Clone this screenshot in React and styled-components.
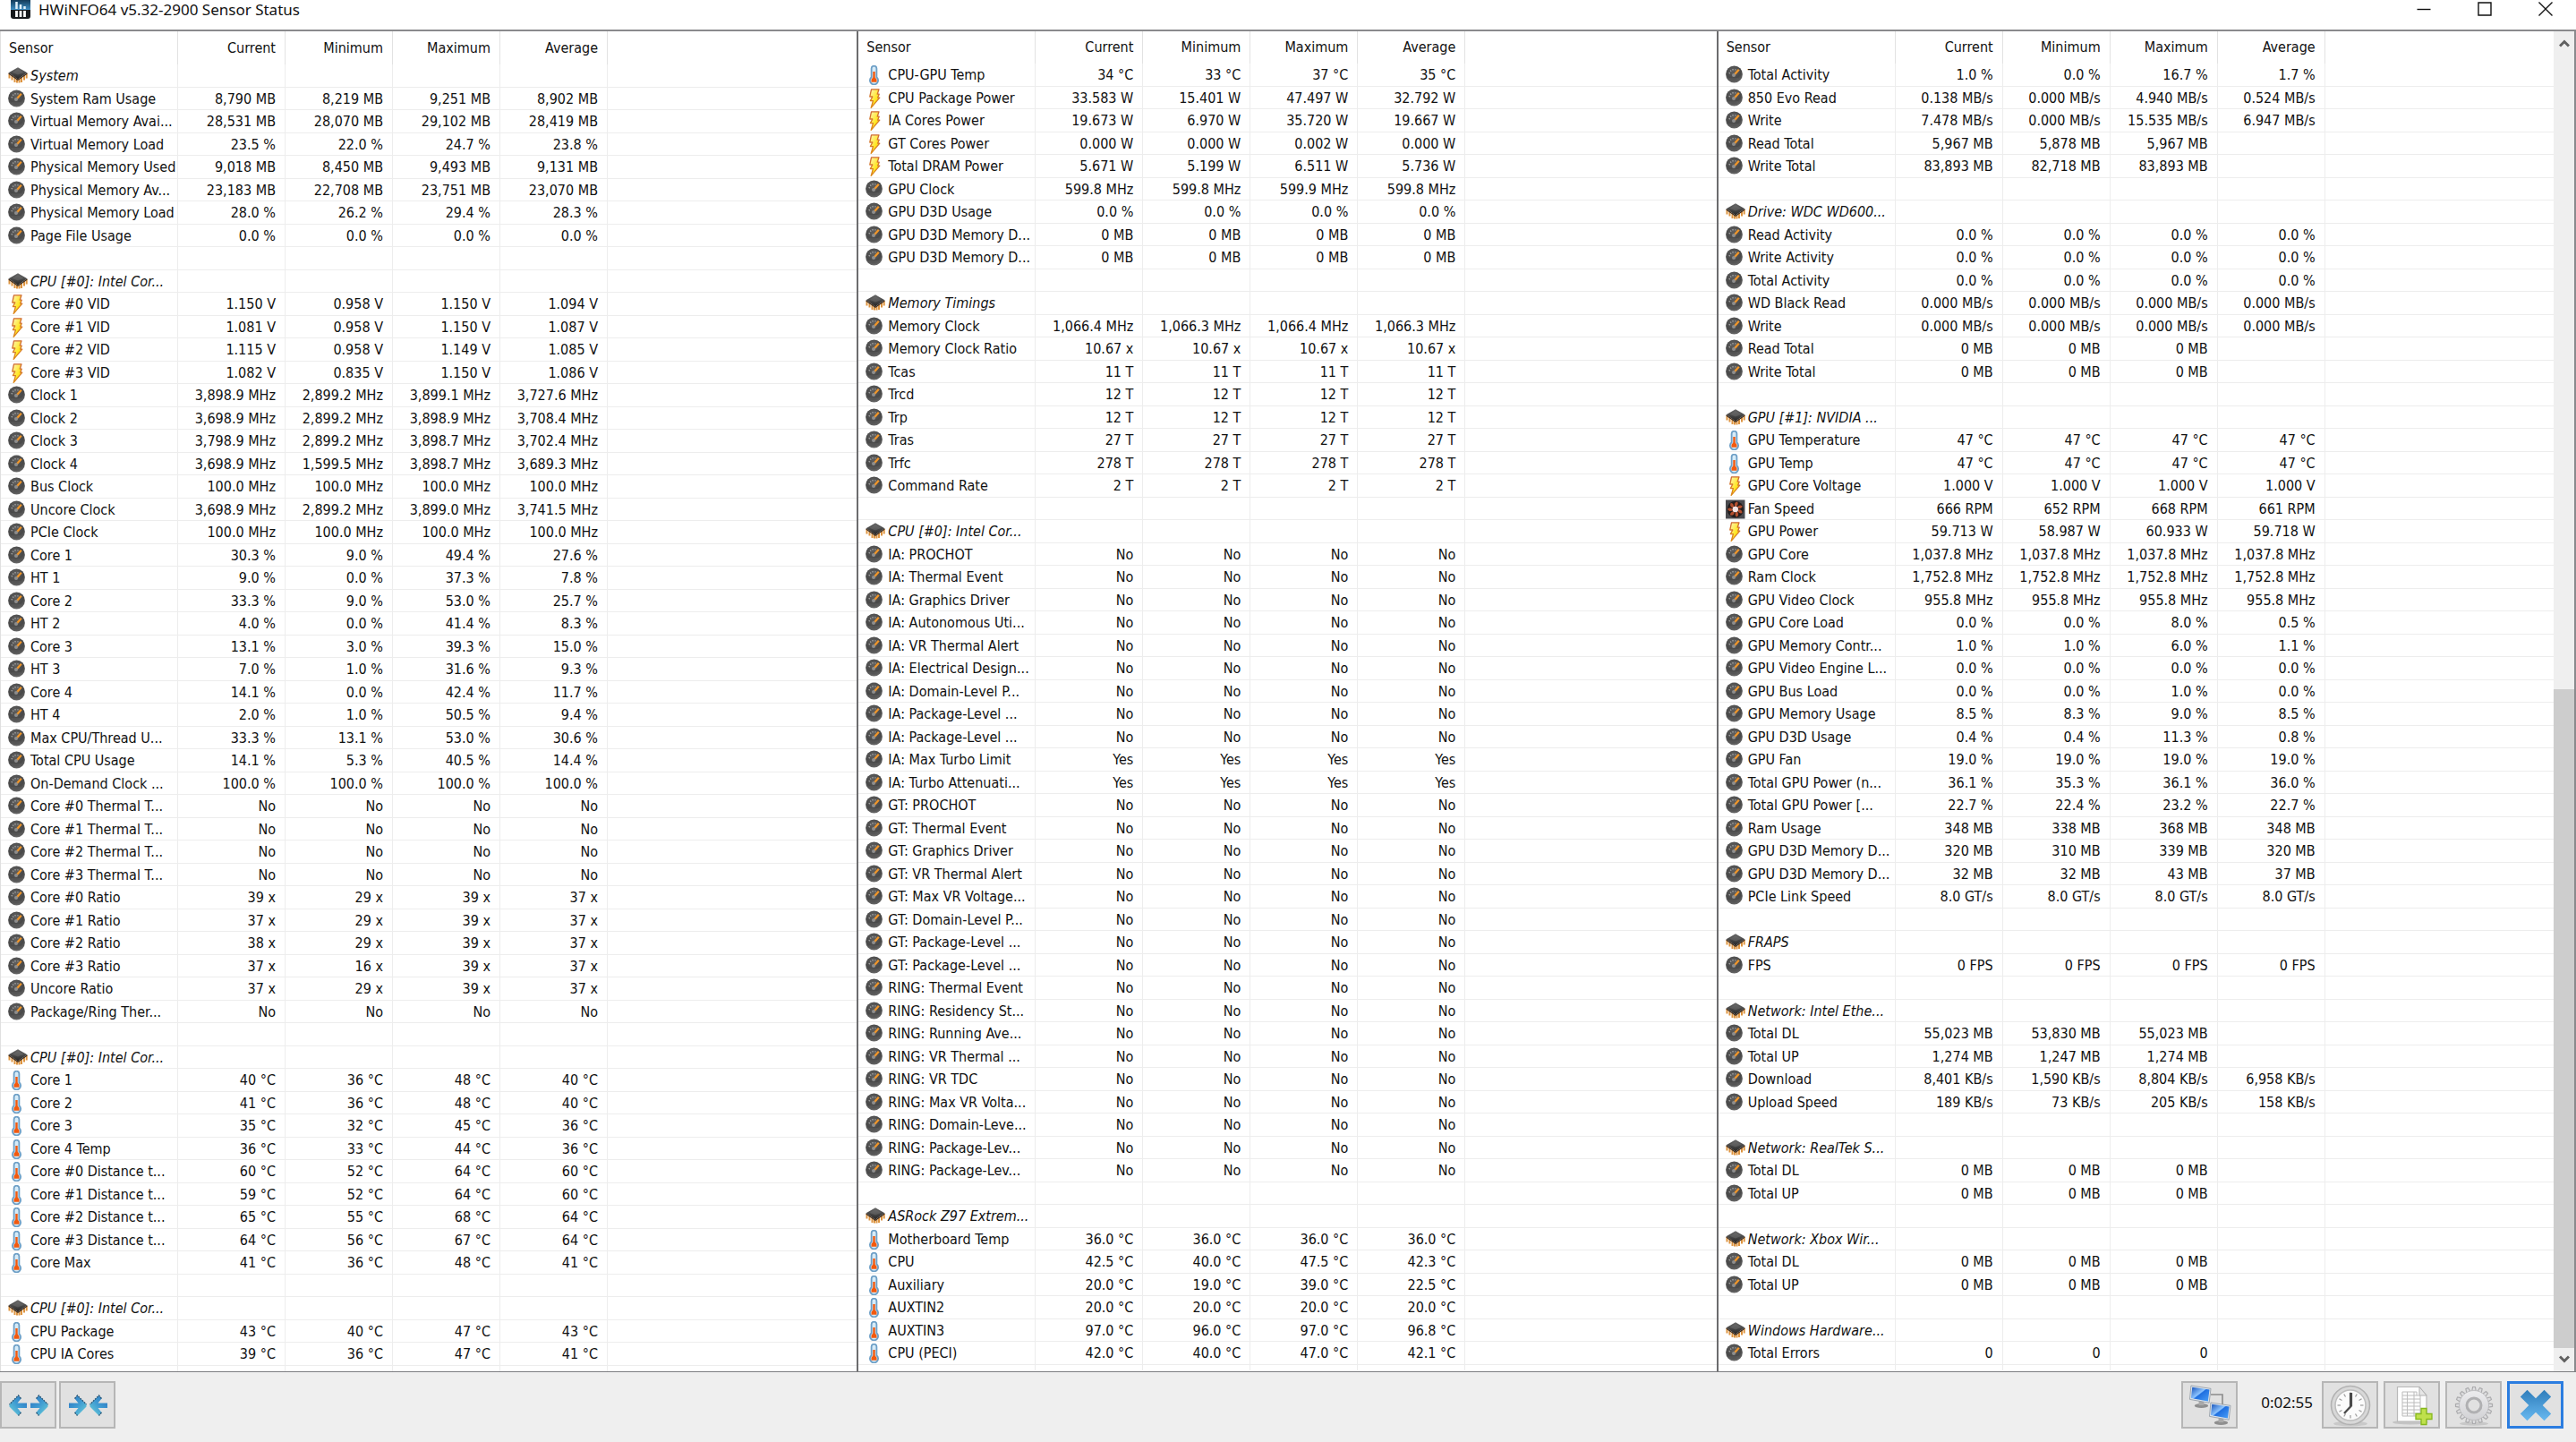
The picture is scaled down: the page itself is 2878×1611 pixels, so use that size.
import React from "react";
import styled, { createGlobalStyle } from "styled-components";

const Global = createGlobalStyle`
  * { box-sizing: border-box; }
  body {
    margin: 0;
    background: #fff;
    color: #111;
    font: 16px/22px "DejaVu Sans Condensed", "DejaVu Sans", sans-serif;
    font-stretch: condensed;
  }
`;

const Page = styled.div`
  min-height: 100vh;
  display: flex;
  flex-direction: column;
`;

const TitleBar = styled.header`
  display: flex;
  align-items: flex-start;
  justify-content: space-between;
  height: 33px;
`;

const Title = styled.h1`
  display: flex;
  align-items: center;
  gap: 9px;
  margin: 0;
  padding-left: 12px;
  font: 400 17px/22px "Noto Sans", "Open Sans", sans-serif;
`;

const WindowButtons = styled.div`
  display: flex;
`;

const WindowButton = styled.button`
  width: 68px;
  height: 20px;
  padding: 0;
  border: 0;
  background: none;
  display: flex;
  align-items: center;
  justify-content: center;
`;

const Panels = styled.main`
  flex: 1;
  display: grid;
  grid-template-columns: 319fr 320fr 320fr;
  border-top: 2px solid #8a8a8d;
  border-bottom: 1px solid #7c7d80;
`;

const Panel = styled.section`
  display: flex;
  align-items: stretch;
  min-width: 0;
  border-left: ${(p) => (p.$first ? "1px solid #e0e0e0" : "2px solid #6c6c6e")};
`;

const Table = styled.table`
  flex: 1;
  min-width: 0;
  align-self: flex-start;
  table-layout: fixed;
  border-collapse: separate;
  border-spacing: 0;
`;

const Col = styled.col`
  width: ${(p) => (p.$name ? "198px" : p.$rest ? "auto" : "120px")};
`;

const Head = styled.th`
  height: ${(p) => (p.$tall ? "37px" : "36px")};
  padding: 0 10px 0 9px;
  border-right: ${(p) => (p.$rest ? "0" : "1px solid #e2e2e2")};
  font-weight: 400;
  text-align: ${(p) => (p.$name ? "left" : "right")};
`;

const Row = styled.tr`
  height: 25px;
  &:nth-child(odd) {
    height: 26px;
  }
`;

const Tail = styled.tr`
  height: 6px;
`;

const Cell = styled.td`
  padding: ${(p) => (p.$bare ? "0" : "2px 10px 0 0")};
  border-right: 1px solid #ededed;
  border-bottom: ${(p) => (p.$bare ? "0" : "1px solid #ededed")};
  text-align: right;
  vertical-align: top;
  white-space: nowrap;
  &:last-child {
    border-right: 0;
  }
`;

const NameCell = styled(Cell)`
  padding: 2px 0 0 8px;
`;

const Name = styled.div`
  display: flex;
  align-items: center;
  gap: 3px;
  height: 22px;
  overflow: hidden;
  font-style: ${(p) => (p.$group ? "italic" : "normal")};
`;

const Glyph = styled.svg`
  display: block;
  flex: none;
  width: ${(p) => p.$w || 22}px;
  height: ${(p) => p.$h || 22}px;
`;

const Defs = styled.svg`
  display: block;
  width: 0;
  height: 0;
`;

const ScrollBar = styled.div`
  flex: none;
  width: 25px;
  display: flex;
  flex-direction: column;
  background: #efefef;
  border-right: 2px solid #8a8a8d;
`;

const ScrollArrow = styled.button`
  height: 26px;
  padding: 0;
  border: 0;
  background: none;
  display: flex;
  align-items: center;
  justify-content: center;
`;

const ScrollSpace = styled.div`
  flex: 709 0 0;
`;

const ScrollThumb = styled.div`
  flex: 737 0 0;
  background: #cdcdcd;
`;

const ToolBar = styled.footer`
  display: flex;
  justify-content: space-between;
  height: 78px;
  padding: 10px 14px 0 0;
  background: #efefef;
`;

const ToolGroup = styled.div`
  display: flex;
  gap: ${(p) => p.$gap}px;
`;

const ToolButton = styled.button`
  width: 63px;
  height: 53px;
  padding: 0;
  border: ${(p) => (p.$active ? "3px solid #2b7de0" : "2px solid #b6b6b6")};
  background: #e1e1e1;
  display: flex;
  align-items: center;
  justify-content: center;
`;

const Timer = styled.time`
  padding: 0 4px 0 20px;
  font: 17px/48px "Noto Sans", "Open Sans", sans-serif;
`;

/* One line per row: icon | name | current | minimum | maximum | average.
   A single value stands for all four columns; an empty line is a spacer. */
const LEFT = `
h|System
g|System Ram Usage|8,790 MB|8,219 MB|9,251 MB|8,902 MB
g|Virtual Memory Avai...|28,531 MB|28,070 MB|29,102 MB|28,419 MB
g|Virtual Memory Load|23.5 %|22.0 %|24.7 %|23.8 %
g|Physical Memory Used|9,018 MB|8,450 MB|9,493 MB|9,131 MB
g|Physical Memory Av...|23,183 MB|22,708 MB|23,751 MB|23,070 MB
g|Physical Memory Load|28.0 %|26.2 %|29.4 %|28.3 %
g|Page File Usage|0.0 %

h|CPU [#0]: Intel Cor...
v|Core #0 VID|1.150 V|0.958 V|1.150 V|1.094 V
v|Core #1 VID|1.081 V|0.958 V|1.150 V|1.087 V
v|Core #2 VID|1.115 V|0.958 V|1.149 V|1.085 V
v|Core #3 VID|1.082 V|0.835 V|1.150 V|1.086 V
g|Clock 1|3,898.9 MHz|2,899.2 MHz|3,899.1 MHz|3,727.6 MHz
g|Clock 2|3,698.9 MHz|2,899.2 MHz|3,898.9 MHz|3,708.4 MHz
g|Clock 3|3,798.9 MHz|2,899.2 MHz|3,898.7 MHz|3,702.4 MHz
g|Clock 4|3,698.9 MHz|1,599.5 MHz|3,898.7 MHz|3,689.3 MHz
g|Bus Clock|100.0 MHz
g|Uncore Clock|3,698.9 MHz|2,899.2 MHz|3,899.0 MHz|3,741.5 MHz
g|PCIe Clock|100.0 MHz
g|Core 1|30.3 %|9.0 %|49.4 %|27.6 %
g|HT 1|9.0 %|0.0 %|37.3 %|7.8 %
g|Core 2|33.3 %|9.0 %|53.0 %|25.7 %
g|HT 2|4.0 %|0.0 %|41.4 %|8.3 %
g|Core 3|13.1 %|3.0 %|39.3 %|15.0 %
g|HT 3|7.0 %|1.0 %|31.6 %|9.3 %
g|Core 4|14.1 %|0.0 %|42.4 %|11.7 %
g|HT 4|2.0 %|1.0 %|50.5 %|9.4 %
g|Max CPU/Thread U...|33.3 %|13.1 %|53.0 %|30.6 %
g|Total CPU Usage|14.1 %|5.3 %|40.5 %|14.4 %
g|On-Demand Clock ...|100.0 %
g|Core #0 Thermal T...|No
g|Core #1 Thermal T...|No
g|Core #2 Thermal T...|No
g|Core #3 Thermal T...|No
g|Core #0 Ratio|39 x|29 x|39 x|37 x
g|Core #1 Ratio|37 x|29 x|39 x|37 x
g|Core #2 Ratio|38 x|29 x|39 x|37 x
g|Core #3 Ratio|37 x|16 x|39 x|37 x
g|Uncore Ratio|37 x|29 x|39 x|37 x
g|Package/Ring Ther...|No

h|CPU [#0]: Intel Cor...
t|Core 1|40 °C|36 °C|48 °C|40 °C
t|Core 2|41 °C|36 °C|48 °C|40 °C
t|Core 3|35 °C|32 °C|45 °C|36 °C
t|Core 4 Temp|36 °C|33 °C|44 °C|36 °C
t|Core #0 Distance t...|60 °C|52 °C|64 °C|60 °C
t|Core #1 Distance t...|59 °C|52 °C|64 °C|60 °C
t|Core #2 Distance t...|65 °C|55 °C|68 °C|64 °C
t|Core #3 Distance t...|64 °C|56 °C|67 °C|64 °C
t|Core Max|41 °C|36 °C|48 °C|41 °C

h|CPU [#0]: Intel Cor...
t|CPU Package|43 °C|40 °C|47 °C|43 °C
t|CPU IA Cores|39 °C|36 °C|47 °C|41 °C`;

const MIDDLE = `
t|CPU-GPU Temp|34 °C|33 °C|37 °C|35 °C
v|CPU Package Power|33.583 W|15.401 W|47.497 W|32.792 W
v|IA Cores Power|19.673 W|6.970 W|35.720 W|19.667 W
v|GT Cores Power|0.000 W|0.000 W|0.002 W|0.000 W
v|Total DRAM Power|5.671 W|5.199 W|6.511 W|5.736 W
g|GPU Clock|599.8 MHz|599.8 MHz|599.9 MHz|599.8 MHz
g|GPU D3D Usage|0.0 %
g|GPU D3D Memory D...|0 MB
g|GPU D3D Memory D...|0 MB

h|Memory Timings
g|Memory Clock|1,066.4 MHz|1,066.3 MHz|1,066.4 MHz|1,066.3 MHz
g|Memory Clock Ratio|10.67 x
g|Tcas|11 T
g|Trcd|12 T
g|Trp|12 T
g|Tras|27 T
g|Trfc|278 T
g|Command Rate|2 T

h|CPU [#0]: Intel Cor...
g|IA: PROCHOT|No
g|IA: Thermal Event|No
g|IA: Graphics Driver|No
g|IA: Autonomous Uti...|No
g|IA: VR Thermal Alert|No
g|IA: Electrical Design...|No
g|IA: Domain-Level P...|No
g|IA: Package-Level ...|No
g|IA: Package-Level ...|No
g|IA: Max Turbo Limit|Yes
g|IA: Turbo Attenuati...|Yes
g|GT: PROCHOT|No
g|GT: Thermal Event|No
g|GT: Graphics Driver|No
g|GT: VR Thermal Alert|No
g|GT: Max VR Voltage...|No
g|GT: Domain-Level P...|No
g|GT: Package-Level ...|No
g|GT: Package-Level ...|No
g|RING: Thermal Event|No
g|RING: Residency St...|No
g|RING: Running Ave...|No
g|RING: VR Thermal ...|No
g|RING: VR TDC|No
g|RING: Max VR Volta...|No
g|RING: Domain-Leve...|No
g|RING: Package-Lev...|No
g|RING: Package-Lev...|No

h|ASRock Z97 Extrem...
t|Motherboard Temp|36.0 °C
t|CPU|42.5 °C|40.0 °C|47.5 °C|42.3 °C
t|Auxiliary|20.0 °C|19.0 °C|39.0 °C|22.5 °C
t|AUXTIN2|20.0 °C
t|AUXTIN3|97.0 °C|96.0 °C|97.0 °C|96.8 °C
t|CPU (PECI)|42.0 °C|40.0 °C|47.0 °C|42.1 °C`;

const RIGHT = `
g|Total Activity|1.0 %|0.0 %|16.7 %|1.7 %
g|850 Evo Read|0.138 MB/s|0.000 MB/s|4.940 MB/s|0.524 MB/s
g|Write|7.478 MB/s|0.000 MB/s|15.535 MB/s|6.947 MB/s
g|Read Total|5,967 MB|5,878 MB|5,967 MB|
g|Write Total|83,893 MB|82,718 MB|83,893 MB|

h|Drive: WDC WD600...
g|Read Activity|0.0 %
g|Write Activity|0.0 %
g|Total Activity|0.0 %
g|WD Black Read|0.000 MB/s
g|Write|0.000 MB/s
g|Read Total|0 MB|0 MB|0 MB|
g|Write Total|0 MB|0 MB|0 MB|

h|GPU [#1]: NVIDIA ...
t|GPU Temperature|47 °C
t|GPU Temp|47 °C
v|GPU Core Voltage|1.000 V
f|Fan Speed|666 RPM|652 RPM|668 RPM|661 RPM
v|GPU Power|59.713 W|58.987 W|60.933 W|59.718 W
g|GPU Core|1,037.8 MHz
g|Ram Clock|1,752.8 MHz
g|GPU Video Clock|955.8 MHz
g|GPU Core Load|0.0 %|0.0 %|8.0 %|0.5 %
g|GPU Memory Contr...|1.0 %|1.0 %|6.0 %|1.1 %
g|GPU Video Engine L...|0.0 %
g|GPU Bus Load|0.0 %|0.0 %|1.0 %|0.0 %
g|GPU Memory Usage|8.5 %|8.3 %|9.0 %|8.5 %
g|GPU D3D Usage|0.4 %|0.4 %|11.3 %|0.8 %
g|GPU Fan|19.0 %
g|Total GPU Power (n...|36.1 %|35.3 %|36.1 %|36.0 %
g|Total GPU Power [...|22.7 %|22.4 %|23.2 %|22.7 %
g|Ram Usage|348 MB|338 MB|368 MB|348 MB
g|GPU D3D Memory D...|320 MB|310 MB|339 MB|320 MB
g|GPU D3D Memory D...|32 MB|32 MB|43 MB|37 MB
g|PCIe Link Speed|8.0 GT/s

h|FRAPS
g|FPS|0 FPS

h|Network: Intel Ethe...
g|Total DL|55,023 MB|53,830 MB|55,023 MB|
g|Total UP|1,274 MB|1,247 MB|1,274 MB|
g|Download|8,401 KB/s|1,590 KB/s|8,804 KB/s|6,958 KB/s
g|Upload Speed|189 KB/s|73 KB/s|205 KB/s|158 KB/s

h|Network: RealTek S...
g|Total DL|0 MB|0 MB|0 MB|
g|Total UP|0 MB|0 MB|0 MB|

h|Network: Xbox Wir...
g|Total DL|0 MB|0 MB|0 MB|
g|Total UP|0 MB|0 MB|0 MB|

h|Windows Hardware...
g|Total Errors|0|0|0|`;

const parse = (source) =>
  source
    .slice(1)
    .split("\n")
    .map((line) => {
      const [kind = "", name = "", ...values] = line.split("|");
      if (values.length === 1) return { kind, name, values: Array(4).fill(values[0]) };
      return { kind, name, values: [0, 1, 2, 3].map((i) => values[i] || "") };
    });

const SYMBOLS = { h: "chip", g: "gauge", v: "bolt", t: "thermo", f: "fan" };

const SharedArt = () => (
  <Defs aria-hidden="true">
    <defs>
      <radialGradient id="dial" cx="45%" cy="30%" r="75%">
        <stop offset="0" stopColor="#606060" />
        <stop offset="0.6" stopColor="#484848" />
        <stop offset="1" stopColor="#6e6e6e" />
      </radialGradient>
      <linearGradient id="chipTop" x1="0" y1="0" x2="0" y2="1">
        <stop offset="0" stopColor="#6a6a6a" />
        <stop offset="1" stopColor="#262626" />
      </linearGradient>
      <linearGradient id="boltFill" x1="0" y1="0" x2="1" y2="1">
        <stop offset="0" stopColor="#fff6b8" />
        <stop offset="0.6" stopColor="#ffe51c" />
        <stop offset="1" stopColor="#f6c400" />
      </linearGradient>
      <linearGradient id="boltEdge" x1="0" y1="0" x2="0" y2="1">
        <stop offset="0" stopColor="#cf6a35" />
        <stop offset="1" stopColor="#dd8a1c" />
      </linearGradient>
      <linearGradient id="screen" x1="0" y1="0" x2="1" y2="1">
        <stop offset="0" stopColor="#1450b8" />
        <stop offset="0.45" stopColor="#8cc4ff" />
        <stop offset="0.5" stopColor="#1f6fe0" />
        <stop offset="1" stopColor="#4aa0f8" />
      </linearGradient>
      <linearGradient id="cross" x1="0" y1="0" x2="0" y2="1">
        <stop offset="0" stopColor="#2f7dbb" />
        <stop offset="1" stopColor="#68b9f0" />
      </linearGradient>
      <linearGradient id="gearFill" x1="0" y1="0" x2="0" y2="1">
        <stop offset="0" stopColor="#ececee" />
        <stop offset="1" stopColor="#d2d2d5" />
      </linearGradient>
      <linearGradient id="appTop" x1="0" y1="0" x2="0" y2="1">
        <stop offset="0" stopColor="#123a58" />
        <stop offset="1" stopColor="#3f8fc4" />
      </linearGradient>
      <linearGradient id="arrowFill" x1="0" y1="0" x2="1" y2="1">
        <stop offset="0" stopColor="#2a74c0" />
        <stop offset="0.5" stopColor="#3f9bd2" />
        <stop offset="1" stopColor="#6ed2d8" />
      </linearGradient>
      <symbol id="gauge" viewBox="0 0 22 22">
        <circle cx="9.5" cy="10" r="9.4" fill="url(#dial)" />
        <path d="M3.6 8.6l1.4.5M5.2 5.6l1 1M8 4v1.4M11 4.2v1.2" stroke="#b4b4b4" strokeWidth="1.1" />
        <path d="M9.2 11l5.6-6.2" stroke="#f0962a" strokeWidth="2.4" />
        <circle cx="9" cy="11" r="2" fill="#8d8d8d" />
        <path d="M4 15h10" stroke="#5c5c5c" strokeWidth="1" />
      </symbol>
      <symbol id="chip" viewBox="0 0 22 22">
        <path d="M1.5 8v5.500M4.500 10v5.500M7.500 12v6M10 14v4.500M12.500 14v4.500M15 12v6M18 10v5.500M20.700 8v5.500" stroke="#dd9440" strokeWidth="2" />
        <path d="M11 1.200L21.400 7.200 11 14.400 0.600 7.200z" fill="url(#chipTop)" />
        <path d="M0.600 7.200L11 14.400 21.400 7.200v1.600L11 16 0.600 8.800z" fill="#3c2e24" />
        <path d="M11 3.200L17.500 6.800 11 9.600 4.500 6.800z" fill="#777" opacity="0.4" />
      </symbol>
      <symbol id="bolt" viewBox="0 0 22 22">
        <path d="M6.500 0.800H15L13.200 6.200H15.200L13.600 10.200H15.800L6.200 21.400 8.400 13.600H5.400L7.800 9H4.800z" fill="url(#boltFill)" stroke="url(#boltEdge)" strokeWidth="1.300" strokeLinejoin="round" />
      </symbol>
      <symbol id="thermo" viewBox="0 0 22 22">
        <path d="M6.600 3.600a2.900 2.900 0 0 1 5.800 0V13.200a4.600 4.600 0 1 1-5.800 0z" fill="#d6ebf8" stroke="#6d9fc6" strokeWidth="1.800" />
        <path d="M8.300 7h2.400v6.500l1.800 2.200v3.100H6.500v-3.100l1.800-2.200z" fill="#f2590e" />
      </symbol>
      <symbol id="fan" viewBox="0 0 22 22">
        <rect x="0" y="0.500" width="21.500" height="21" fill="#4a4a4e" />
        <circle cx="10.800" cy="11" r="9.200" fill="#231d1d" />
        {[0, 51, 103, 154, 206, 257, 309].map((a) => (
          <path key={a} d="M10.800 8.500C9 6 10 3.200 13 2.600 14.500 4.500 13.500 6.500 11.800 8z" fill="#b5502f" transform={`rotate(${a} 10.800 11)`} />
        ))}
        <circle cx="10.800" cy="11" r="3.200" fill="#f3e4e4" />
      </symbol>
      <symbol id="arrowRight" viewBox="0 0 22 24">
        <path d="M1 9.500H11.500L7.500 4.500 10.500 1 20.500 11V13.500L10.500 23.500 7.500 20 11.500 15H1z" fill="url(#arrowFill)" />
        <path d="M7.500 4.500L10.500 1 20.500 11M7.500 20L10.500 23.500" fill="none" stroke="#24506f" strokeWidth="1.200" strokeDasharray="2 1" />
      </symbol>
      <symbol id="monitor" viewBox="0 0 26 28">
        <ellipse cx="14" cy="24.500" rx="8" ry="2.600" fill="#8f8f8f" />
        <path d="M11 18h6v6h-6z" fill="#a9a9a9" />
        <path d="M2 1L25 4.500 23 21 0.500 17z" fill="#dce4ec" stroke="#8a949e" strokeWidth="0.800" />
        <path d="M3.400 2.800L23.400 5.800 21.700 19.200 2 15.600z" fill="url(#screen)" />
      </symbol>
    </defs>
  </Defs>
);

const AppLogo = () => (
  <Glyph viewBox="0 0 22 22" aria-hidden="true">
    <rect width="22" height="21" rx="3" fill="#16191c" />
    <path d="M0 0H22V11H0z" fill="url(#appTop)" />
    <path d="M6.500 2v8M11 5v5M15.500 7v3" stroke="#dff0fa" strokeWidth="2.500" />
    <path d="M6.500 12v7M11 12v7M15.500 12v7" stroke="#fff" strokeWidth="2.800" />
  </Glyph>
);

const TwoArrows = ({ inward }) => (
  <Glyph viewBox="0 0 46 24" $w={46} $h={24} aria-hidden="true">
    <g transform={inward ? "translate(46 0) scale(-1 1)" : "translate(22 0) scale(-1 1)"}>
      <use href="#arrowRight" width="22" height="24" />
    </g>
    <g transform={inward ? "translate(1 0)" : "translate(24 0)"}>
      <use href="#arrowRight" width="22" height="24" />
    </g>
  </Glyph>
);

const Computers = () => (
  <Glyph viewBox="0 0 48 48" $w={48} $h={48} aria-hidden="true">
    <path d="M25 12h13v12" fill="none" stroke="#8b8b8b" strokeWidth="1.600" />
    <use href="#monitor" x="1" y="1" width="25" height="27" />
    <use href="#monitor" x="23" y="20" width="25" height="27" />
  </Glyph>
);

const Clock = () => (
  <Glyph viewBox="0 0 48 48" $w={48} $h={48} aria-hidden="true">
    <ellipse cx="24" cy="44.500" rx="19" ry="3" fill="#c9c9c9" />
    <circle cx="24" cy="24" r="21.500" fill="#d8d8d8" stroke="#b2b2b2" strokeWidth="1.600" />
    <circle cx="24" cy="24" r="17" fill="#fbfbfb" stroke="#bdbdbd" strokeWidth="1.500" />
    {Array.from({ length: 12 }, (_, i) => (
      <path key={i} d="M24 9.500v3.500" stroke="#9a9a9a" strokeWidth="1.200" transform={`rotate(${i * 30} 24 24)`} />
    ))}
    <path d="M24.500 10v15" stroke="#4a4a4a" strokeWidth="3.200" />
    <path d="M25 24.500L17 33" stroke="#4a4a4a" strokeWidth="2.400" />
  </Glyph>
);

const SheetPlus = () => (
  <Glyph viewBox="0 0 48 48" $w={48} $h={48} aria-hidden="true">
    <ellipse cx="22" cy="43" rx="20" ry="2.500" fill="#c4c4c4" />
    <path d="M7.500 3.500H32L40 13V42H7.500z" fill="#fdfdfd" stroke="#b8b8b8" strokeWidth="1.200" />
    <path d="M32 3.500V13h8z" fill="#e6e6e6" stroke="#b0b0b0" strokeWidth="1" />
    <path d="M13 9h16v4h4v23H13zM13 13h16M13 17h20M13 21h20M13 25h20M13 29h20M13 33h20M18.500 9v27M26 9v27" fill="none" stroke="#bcbcbc" strokeWidth="1" />
    <path d="M34 27.500h6v6h6v6h-6v6h-6v-6h-6v-6h6z" fill="#bfe04c" stroke="#86b81c" strokeWidth="1.300" />
  </Glyph>
);

const Gear = () => (
  <Glyph viewBox="0 0 48 48" $w={48} $h={48} aria-hidden="true">
    <ellipse cx="24" cy="44.500" rx="16" ry="2.200" fill="#c8c8c8" />
    {Array.from({ length: 16 }, (_, i) => (
      <path key={i} d="M21.600 9l1-5.500h2.800l1 5.500z" fill="#dcdcde" stroke="#acacae" strokeWidth="1.200" transform={`rotate(${i * 22.5} 24 24)`} />
    ))}
    <circle cx="24" cy="24" r="16.500" fill="url(#gearFill)" stroke="#b8b8ba" strokeWidth="0.800" />
    <circle cx="24" cy="24" r="8" fill="#e1e1e1" stroke="#b0b0b2" strokeWidth="3" />
  </Glyph>
);

const Cross = () => (
  <Glyph viewBox="0 0 36 36" $w={36} $h={36} aria-hidden="true">
    <path d="M8.500 0.800L18 10.300 27.500 0.800 35.200 8.500 25.700 18 35.200 27.500 27.500 35.200 18 25.700 8.500 35.200 0.800 27.500 10.300 18 0.800 8.500z" fill="url(#cross)" />
  </Glyph>
);

const Chevron = ({ d }) => (
  <Glyph viewBox="0 0 12 10" $w={12} $h={10} aria-hidden="true">
    <path d={d} fill="none" stroke="#606060" strokeWidth="3" />
  </Glyph>
);

const SensorRow = ({ kind, name, values }) => (
  <Row>
    <NameCell>
      <Name $group={kind === "h"}>
        {kind && (
          <Glyph aria-hidden="true">
            <use href={`#${SYMBOLS[kind]}`} />
          </Glyph>
        )}
        {name}
      </Name>
    </NameCell>
    {values.map((value, i) => (
      <Cell key={i}>{value}</Cell>
    ))}
    <Cell />
  </Row>
);

const SensorTable = ({ source, tall }) => (
  <Table>
    <colgroup>
      <Col $name />
      <Col />
      <Col />
      <Col />
      <Col />
      <Col $rest />
    </colgroup>
    <thead>
      <tr>
        <Head scope="col" $name $tall={tall}>Sensor</Head>
        {["Current", "Minimum", "Maximum", "Average"].map((label) => (
          <Head key={label} scope="col" $tall={tall}>{label}</Head>
        ))}
        <Head as="td" $rest $tall={tall} />
      </tr>
    </thead>
    <tbody>
      {parse(source).map((row, i) => (
        <SensorRow key={i} {...row} />
      ))}
      <Tail>
        {[0, 1, 2, 3, 4, 5].map((i) => (
          <Cell key={i} $bare />
        ))}
      </Tail>
    </tbody>
  </Table>
);

export default function App() {
  return (
    <>
      <Global />
      <SharedArt />
      <Page>
        <TitleBar>
          <Title>
            <AppLogo />
            HWiNFO64 v5.32-2900 Sensor Status
          </Title>
          <WindowButtons>
            <WindowButton aria-label="Minimize">
              <Glyph viewBox="0 0 16 16" $w={16} $h={16}>
                <path d="M0.500 8.500h15" stroke="#111" strokeWidth="1.400" />
              </Glyph>
            </WindowButton>
            <WindowButton aria-label="Maximize">
              <Glyph viewBox="0 0 16 16" $w={16} $h={16}>
                <path d="M1 1h14v14H1z" fill="none" stroke="#111" strokeWidth="1.400" />
              </Glyph>
            </WindowButton>
            <WindowButton aria-label="Close window">
              <Glyph viewBox="0 0 16 16" $w={16} $h={16}>
                <path d="M0.500 0.500l15 15M15.500 0.500l-15 15" stroke="#111" strokeWidth="1.400" />
              </Glyph>
            </WindowButton>
          </WindowButtons>
        </TitleBar>
        <Panels>
          <Panel $first>
            <SensorTable source={LEFT} tall />
          </Panel>
          <Panel>
            <SensorTable source={MIDDLE} />
          </Panel>
          <Panel>
            <SensorTable source={RIGHT} />
            <ScrollBar>
              <ScrollArrow aria-label="Scroll up">
                <Chevron d="M1 8.500l5-5 5 5" />
              </ScrollArrow>
              <ScrollSpace />
              <ScrollThumb />
              <ScrollArrow aria-label="Scroll down">
                <Chevron d="M1 1.500l5 5 5-5" />
              </ScrollArrow>
            </ScrollBar>
          </Panel>
        </Panels>
        <ToolBar>
          <ToolGroup $gap={3}>
            <ToolButton aria-label="Expand columns">
              <TwoArrows />
            </ToolButton>
            <ToolButton aria-label="Shrink columns">
              <TwoArrows inward />
            </ToolButton>
          </ToolGroup>
          <ToolGroup $gap={6}>
            <ToolButton aria-label="Remote sensors">
              <Computers />
            </ToolButton>
            <Timer>0:02:55</Timer>
            <ToolButton aria-label="Reset clock">
              <Clock />
            </ToolButton>
            <ToolButton aria-label="Start logging">
              <SheetPlus />
            </ToolButton>
            <ToolButton aria-label="Settings">
              <Gear />
            </ToolButton>
            <ToolButton aria-label="Close" $active>
              <Cross />
            </ToolButton>
          </ToolGroup>
        </ToolBar>
      </Page>
    </>
  );
}
